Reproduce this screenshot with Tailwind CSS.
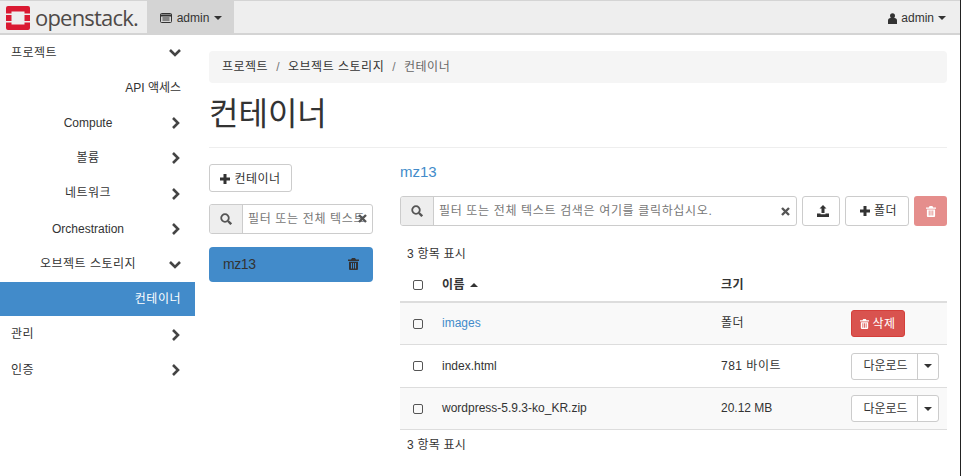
<!DOCTYPE html>
<html lang="ko">
<head>
<meta charset="UTF-8" />
<title>컨테이너 - OpenStack Dashboard</title>
<script src="https://cdn.jsdelivr.net/npm/@tailwindcss/browser@4"></script>
</head>
<body class="h-[476px] w-[961px] overflow-hidden bg-white font-['Liberation_Sans','Noto_Sans_CJK_KR',sans-serif] text-[12px] tracking-[0.5px] text-[#333] border-r border-[#222]">
    <!-- top bar -->
    <header class="flex h-[35px] items-stretch border-t border-b-2 border-[#d4d4d4] bg-[#eeeeee]">
        <a class="flex w-[147px] items-center pl-[6px] pt-[2px]">
            <svg width="24" height="24" viewBox="0 0 24 24">
                <path fill="#da1a32" d="M2 0h20a2 2 0 0 1 2 2v5.500h-5.500v-2h-13v2H0V2a2 2 0 0 1 2-2zM0 9h5.500v6H0zM18.500 9H24v6h-5.500zM0 16.500h5.500v2h13v-2H24V22a2 2 0 0 1-2 2H2a2 2 0 0 1-2-2z" />
            </svg>
            <span class="ml-[5px] -mt-[2px] font-['Open_Sans',sans-serif] text-[22px] font-medium leading-none tracking-[-0.8px] text-[#4e4a48]">openstack.</span>
        </a>
        <button class="flex w-[87px] items-center justify-center gap-[5px] bg-[#d4d4d4] pt-[2px] pl-[1px] tracking-normal">
            <svg width="12" height="10" viewBox="0 0 12 10" fill="none" stroke="#333"><rect x=".5" y=".5" width="11" height="9" rx="1" /><path d="M0 2.500h12" stroke-width="2" /><path d="M2.500 5h7M2.500 7h7" /></svg>
            <span>admin</span>
            <svg width="8" height="4" viewBox="0 0 8 4"><path fill="#333" d="M0 0h8L4 4z" /></svg>
        </button>
        <button class="ml-auto mr-[14px] flex items-center gap-[4px] pt-[2px] tracking-normal">
            <svg width="9" height="11" viewBox="0 0 9 11"><circle cx="4.500" cy="2.700" r="2.500" fill="#333" /><path fill="#333" d="M0 11V7.500C0 6 1 5 2.500 5h4C8 5 9 6 9 7.500V11z" /></svg>
            <span>admin</span>
            <svg width="8" height="4" viewBox="0 0 8 4"><path fill="#333" d="M0 0h8L4 4z" /></svg>
        </button>
    </header>

    <div class="flex">
        <!-- sidebar -->
        <nav class="w-[195px] shrink-0">
            <div class="flex h-[35px] items-center pl-[11px]"><span class="w-[154px]">프로젝트</span><svg class="ml-[4px] mt-[1px]" width="12" height="8" viewBox="0 0 12 8" fill="none" stroke="#444" stroke-width="2.600"><path d="M1 1l5 5 5-5" /></svg></div>
            <div class="flex h-[35px] items-center justify-end pr-[14px] tracking-normal">API 액세스</div>
            <div class="flex h-[35px] items-center pl-[11px]"><span class="w-[154px] text-center tracking-normal">Compute</span><svg class="ml-[7px] mt-[1px]" width="8" height="12" viewBox="0 0 8 12" fill="none" stroke="#444" stroke-width="2.600"><path d="M1 1l5 5-5 5" /></svg></div>
            <div class="flex h-[35px] items-center pl-[11px]"><span class="w-[154px] text-center">볼륨</span><svg class="ml-[7px] mt-[1px]" width="8" height="12" viewBox="0 0 8 12" fill="none" stroke="#444" stroke-width="2.600"><path d="M1 1l5 5-5 5" /></svg></div>
            <div class="flex h-[36px] items-center pl-[11px]"><span class="w-[154px] text-center">네트워크</span><svg class="ml-[7px] mt-[1px]" width="8" height="12" viewBox="0 0 8 12" fill="none" stroke="#444" stroke-width="2.600"><path d="M1 1l5 5-5 5" /></svg></div>
            <div class="flex h-[35px] items-center pl-[11px]"><span class="w-[154px] text-center tracking-normal">Orchestration</span><svg class="ml-[7px] mt-[1px]" width="8" height="12" viewBox="0 0 8 12" fill="none" stroke="#444" stroke-width="2.600"><path d="M1 1l5 5-5 5" /></svg></div>
            <div class="flex h-[36px] items-center pl-[11px]"><span class="w-[154px] text-center">오브젝트 스토리지</span><svg class="ml-[4px] mt-[1px]" width="12" height="8" viewBox="0 0 12 8" fill="none" stroke="#444" stroke-width="2.600"><path d="M1 1l5 5 5-5" /></svg></div>
            <div class="flex h-[34px] items-center justify-end bg-[#428bca] pr-[14px] text-white">컨테이너</div>
            <div class="flex h-[36px] items-center pl-[11px]"><span class="w-[161px]">관리</span><svg class="mt-[1px]" width="8" height="12" viewBox="0 0 8 12" fill="none" stroke="#444" stroke-width="2.600"><path d="M1 1l5 5-5 5" /></svg></div>
            <div class="flex h-[35px] items-center pl-[11px]"><span class="w-[161px]">인증</span><svg class="mt-[1px]" width="8" height="12" viewBox="0 0 8 12" fill="none" stroke="#444" stroke-width="2.600"><path d="M1 1l5 5-5 5" /></svg></div>
        </nav>

        <!-- main -->
        <main class="w-[738px] ml-[14px] pt-[16px]">
            <div class="flex h-[32px] items-center rounded-[4px] bg-[#f5f5f5] px-[13px]">
                <span>프로젝트</span><span class="px-[8px] text-[#777]">/</span><span>오브젝트 스토리지</span><span class="px-[8px] text-[#777]">/</span><span class="text-[#666]">컨테이너</span>
            </div>
            <h1 class="mt-[11px] h-[53px] text-[32px] leading-[40px] font-normal tracking-normal">컨테이너</h1>
            <div class="border-t border-[#eee]"></div>

            <div class="flex pt-[16px]">
                <!-- container list -->
                <section class="w-[164px] shrink-0">
                    <button class="flex h-[28px] w-[83px] items-center justify-center gap-[4px] rounded-[3px] border border-[#ccc] bg-white pt-[1px]">
                        <svg width="10" height="10" viewBox="0 0 10 10"><path fill="#333" d="M3.500 0h3v3.500H10v3H6.500V10h-3V6.500H0v-3h3.500z" /></svg>
                        <span>컨테이너</span>
                    </button>
                    <div class="mt-[12px] flex h-[30px] overflow-hidden rounded-[3px] border border-[#ccc]">
                        <span class="flex w-[33px] shrink-0 items-center justify-center border-r border-[#ccc] bg-[#eee]">
                            <svg width="12" height="12" viewBox="0 0 12 12" fill="none" stroke="#555"><circle cx="5" cy="5" r="3.800" stroke-width="1.800" /><path d="M8 8l3.200 3.200" stroke-width="2.400" /></svg>
                        </span>
                        <span class="relative flex min-w-0 grow items-center overflow-hidden pl-[5px] whitespace-nowrap tracking-[0.65px] text-[#777]">
                            필터 또는 전체 텍스트
                            <svg class="absolute right-[5px] top-[9px]" width="9" height="9" viewBox="0 0 9 9" stroke="#555" stroke-width="2.400"><path d="M1 1l7 7M8 1l-7 7" /></svg>
                        </span>
                    </div>
                    <div class="mt-[13px] flex h-[35px] items-center justify-between rounded-[4px] bg-[#428bca] px-[14px] pb-[1px] text-[14px] tracking-[-0.4px]">
                        <span>mz13</span>
                        <svg width="11" height="12" viewBox="0 0 11 12"><path fill="#333" fill-rule="evenodd" d="M4 0h3l1 1.500h3V3H0V1.500h3zM1 3.800h9V11a1 1 0 0 1-1 1H2a1 1 0 0 1-1-1zM3 5v5.500h1V5zm2 0v5.500h1V5zm2 0v5.500h1V5z" /></svg>
                    </div>
                </section>

                <!-- objects -->
                <section class="ml-[27px] w-[547px]">
                    <h3 class="text-[15px] leading-[16px] tracking-normal text-[#428bca]">mz13</h3>
                    <div class="mt-[16px] flex h-[30px] gap-[5px]">
                        <div class="flex w-[397px] overflow-hidden rounded-[3px] border border-[#ccc]">
                            <span class="flex w-[33px] shrink-0 items-center justify-center border-r border-[#ccc] bg-[#eee]">
                                <svg width="12" height="12" viewBox="0 0 12 12" fill="none" stroke="#555"><circle cx="5" cy="5" r="3.800" stroke-width="1.800" /><path d="M8 8l3.200 3.200" stroke-width="2.400" /></svg>
                            </span>
                            <span class="relative flex grow items-center pl-[5px] whitespace-nowrap tracking-[0.65px] text-[#777]">
                                필터 또는 전체 텍스트 검색은 여기를 클릭하십시오.
                                <svg class="absolute right-[6px] top-[10px]" width="9" height="9" viewBox="0 0 9 9" stroke="#555" stroke-width="2.400"><path d="M1 1l7 7M8 1l-7 7" /></svg>
                            </span>
                        </div>
                        <button class="flex w-[38px] items-center justify-center rounded-[3px] border border-[#ccc] bg-white pl-[4px]">
                            <svg width="12" height="12" viewBox="0 0 12 12"><path fill="#333" d="M6 0l3.500 3.500H7.500V8h-3V3.500H2.500zM0 8.500h3.500v.8h5v-.8H12V12H0z" /></svg>
                        </button>
                        <button class="flex w-[64px] items-center justify-center gap-[4px] rounded-[3px] border border-[#ccc] bg-white pl-[3px]">
                            <svg width="10" height="10" viewBox="0 0 10 10"><path fill="#333" d="M3.500 0h3v3.500H10v3H6.500V10h-3V6.500H0v-3h3.500z" /></svg>
                            <span>폴더</span>
                        </button>
                        <button class="flex w-[33px] items-center justify-center rounded-[3px] bg-[#e58e8c]">
                            <svg width="10" height="11" viewBox="0 0 11 12"><path fill="#fff" fill-rule="evenodd" d="M4 0h3l1 1.500h3V3H0V1.500h3zM1 3.800h9V11a1 1 0 0 1-1 1H2a1 1 0 0 1-1-1zM3 5v5.500h1V5zm2 0v5.500h1V5zm2 0v5.500h1V5z" /></svg>
                        </button>
                    </div>
                    <p class="mt-[19px] pl-[7px] leading-[18px] tracking-[0.2px]">3 항목 표시</p>

                    <!-- table -->
                    <div class="mt-[9px] grid h-[31px] grid-cols-[42px_279px_130px_1fr] items-center border-b-2 border-[#ddd] pb-[4px] font-bold">
                        <span class="pl-[13px]"><span class="block size-[10px] rounded-[2px] border border-[#555]"></span></span>
                        <span class="flex items-center gap-[5px]">이름 <svg width="8" height="4" viewBox="0 0 8 4"><path fill="#333" d="M0 4h8L4 0z" /></svg></span>
                        <span>크기</span>
                        <span></span>
                    </div>
                    <div class="grid h-[42px] grid-cols-[42px_279px_130px_1fr] items-center border-b border-[#ddd] bg-[#f9f9f9]">
                        <span class="pl-[13px]"><span class="block size-[10px] rounded-[2px] border border-[#555]"></span></span>
                        <span class="pb-[1px] tracking-normal text-[#428bca]">images</span>
                        <span class="pb-[1px]">폴더</span>
                        <button class="flex h-[27px] w-[54px] items-center justify-center gap-[3px] rounded-[3px] border border-[#d43f3a] bg-[#d9534f] text-white">
                            <svg width="9" height="10" viewBox="0 0 11 12"><path fill="#fff" fill-rule="evenodd" d="M4 0h3l1 1.500h3V3H0V1.500h3zM1 3.800h9V11a1 1 0 0 1-1 1H2a1 1 0 0 1-1-1zM3 5v5.500h1V5zm2 0v5.500h1V5zm2 0v5.500h1V5z" /></svg>
                            <span>삭제</span>
                        </button>
                    </div>
                    <div class="grid h-[43px] grid-cols-[42px_279px_130px_1fr] items-center border-b border-[#ddd] bg-white">
                        <span class="pl-[13px]"><span class="block size-[10px] rounded-[2px] border border-[#555]"></span></span>
                        <span class="tracking-normal">index.html</span>
                        <span>781 바이트</span>
                        <div class="flex h-[27px] w-[88px] rounded-[3px] border border-[#ccc] bg-white">
                            <span class="flex w-[66px] items-center justify-center border-r border-[#ccc] pl-[2px] tracking-normal">다운로드</span>
                            <span class="flex grow items-center justify-center"><svg width="8" height="4" viewBox="0 0 8 4"><path fill="#333" d="M0 0h8L4 4z" /></svg></span>
                        </div>
                    </div>
                    <div class="grid h-[42px] grid-cols-[42px_279px_130px_1fr] items-center border-b border-[#ddd] bg-[#f9f9f9]">
                        <span class="pl-[13px]"><span class="block size-[10px] rounded-[2px] border border-[#555]"></span></span>
                        <span class="pb-[1px] tracking-normal">wordpress-5.9.3-ko_KR.zip</span>
                        <span class="pb-[1px] tracking-normal">20.12 MB</span>
                        <div class="flex h-[27px] w-[88px] rounded-[3px] border border-[#ccc] bg-white">
                            <span class="flex w-[66px] items-center justify-center border-r border-[#ccc] pl-[2px] tracking-normal">다운로드</span>
                            <span class="flex grow items-center justify-center"><svg width="8" height="4" viewBox="0 0 8 4"><path fill="#333" d="M0 0h8L4 4z" /></svg></span>
                        </div>
                    </div>
                    <p class="mt-[6px] pl-[7px] leading-[18px] tracking-[0.2px]">3 항목 표시</p>
                </section>
            </div>
        </main>
    </div>
</body>
</html>
